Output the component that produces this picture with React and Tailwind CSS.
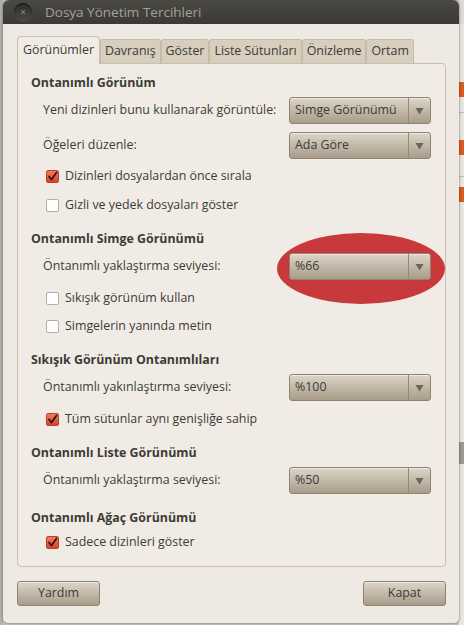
import React from "react";

const TXT = "text-[#3c3b37]";

function Combo({ value }) {
  return (
    <div className="relative z-10 flex h-[27px] w-[142px] items-stretch rounded-[3px] border border-[#8f8474] bg-gradient-to-b from-[#ddd5c8] to-[#a99d8a] shadow-[inset_0_1px_0_rgba(255,255,255,0.45)]">
      <div className={`flex flex-1 items-center pl-[5px] text-[12.4px] ${TXT}`}>{value}</div>
      <div className="flex w-[22px] items-center justify-center border-l border-[#948979]">
        <svg width="9" height="8" viewBox="0 0 9 8">
          <path d="M0.5 1 L8.5 1 L4.5 7.5 Z" fill="#6b645a" />
        </svg>
      </div>
    </div>
  );
}

function Check({ checked, label }) {
  return (
    <div className="flex h-[20px] items-center pl-[15px]">
      {checked ? (
        <div className="flex h-[13px] w-[13px] items-center justify-center rounded-[2px] border border-[#b8432c] bg-gradient-to-b from-[#f47a5c] to-[#dc3f2a]">
          <svg width="11" height="11" viewBox="0 0 11 11">
            <path d="M2 5.5 L4.5 8.5 L9.5 1.5" stroke="#2b1712" strokeWidth="1.8" fill="none" strokeLinecap="round" strokeLinejoin="round" />
          </svg>
        </div>
      ) : (
        <div className="h-[13px] w-[13px] rounded-[2px] border border-[#b7ad9d] bg-white" />
      )}
      <span className={`ml-[6px] text-[12.4px] ${TXT}`}>{label}</span>
    </div>
  );
}

function ComboRow({ label, value, circled }) {
  return (
    <div className="relative flex h-[27px] items-center justify-between pl-[12px]">
      <span className={`text-[12.4px] ${TXT}`}>{label}</span>
      {circled && (
        <div className="absolute right-[-14px] top-[-20px] z-0 h-[71px] w-[168px] rounded-[50%] bg-[#c8393b]" />
      )}
      <Combo value={value} />
    </div>
  );
}

function Heading({ children }) {
  return (
    <div className={`flex h-[20px] items-center text-[12.4px] font-bold ${TXT}`}>{children}</div>
  );
}

function Tab({ children, active }) {
  if (active)
    return (
      <div className="relative z-10 mb-[-1px] flex h-[28px] items-center rounded-t-[4px] border border-b-0 border-[#c9bfac] bg-[#f0ece5] px-[5px] text-[12.4px] text-[#3c3b37]">
        {children}
      </div>
    );
  return (
    <div className="flex h-[24px] items-center rounded-t-[3px] border border-b-0 border-[#c6bba7] bg-[#d8cebd] px-[4px] text-[12.4px] text-[#3c3b37]">
      {children}
    </div>
  );
}

function Button({ children }) {
  return (
    <div className="flex h-[25px] w-[83px] items-center justify-center rounded-[3px] border border-[#8f8474] bg-gradient-to-b from-[#ddd5c8] to-[#a99d8a] text-[12.4px] text-[#3c3b37] shadow-[inset_0_1px_0_rgba(255,255,255,0.45)]">
      {children}
    </div>
  );
}

export default function App() {
  return (
    <div className="relative h-[625px] w-[464px] overflow-hidden bg-[#c9c7c3] font-['Open_Sans',sans-serif]">
      {/* desktop background: left strip */}
      <div className="absolute left-0 top-0 h-[625px] w-[3px] bg-[#b4b2ae]" />
      {/* right strip: another window behind */}
      <div className="absolute right-0 top-0 h-[625px] w-[5px] bg-[#e9e7e4]">
        <div className="h-[24px] bg-[#dedbd6]" />
        <div className="mt-[58px] h-[15px] bg-[#dd5b20]" />
        <div className="mt-[15px] h-px bg-[#bcbab6]" />
        <div className="mt-[27px] h-[15px] bg-[#dd5b20]" />
        <div className="mt-[21px] h-px bg-[#bcbab6]" />
        <div className="mt-[10px] h-[15px] bg-[#dd5b20]" />
        <div className="mt-[240px] h-[22px] bg-[#9c9a95]" />
      </div>

      {/* window */}
      <div className="absolute left-[3px] top-0 flex h-[623px] w-[456px] flex-col overflow-hidden rounded-t-[6px] rounded-b-[5px] bg-[#eeeae3] shadow-[0_0_3px_rgba(0,0,0,0.5)]">
        {/* title bar */}
        <div className="flex h-[24px] items-center bg-gradient-to-b from-[#4a4944] to-[#3a3935]">
          <div className="ml-[11px] flex h-[18px] w-[18px] items-center justify-center rounded-full bg-gradient-to-b from-[#2c2b28] to-[#4a4944] shadow-[inset_0_1px_1px_rgba(0,0,0,0.6),0_1px_0_rgba(255,255,255,0.1)]">
            <span className="text-[10px] leading-none text-[#8c8a84]">×</span>
          </div>
          <span className="ml-[13px] text-[13.5px] text-[#a4a199]">Dosya Yönetim Tercihleri</span>
        </div>

        {/* content */}
        <div className="flex flex-1 flex-col pl-[14px] pr-[13px] pt-[12px]">
          <div className="flex h-[27px] items-end">
            <Tab active>Görünümler</Tab>
            <Tab>Davranış</Tab>
            <Tab>Göster</Tab>
            <Tab>Liste Sütunları</Tab>
            <Tab>Önizleme</Tab>
            <Tab>Ortam</Tab>
          </div>

          <div className="flex h-[504px] flex-col rounded-b-[4px] rounded-tr-[4px] border border-[#c9bfac] bg-[#f0ece5] pl-[13px] pr-[14px]">
            <div className="mt-[9px]"><Heading>Ontanımlı Görünüm</Heading></div>
            <div className="mt-[4px]"><ComboRow label="Yeni dizinleri bunu kullanarak görüntüle:" value="Simge Görünümü" /></div>
            <div className="mt-[8px]"><ComboRow label="Öğeleri düzenle:" value="Ada Göre" /></div>
            <div className="mt-[7px]"><Check checked label="Dizinleri dosyalardan önce sırala" /></div>
            <div className="mt-[9px]"><Check label="Gizli ve yedek dosyaları göster" /></div>

            <div className="mt-[14px]"><Heading>Ontanımlı Simge Görünümü</Heading></div>
            <div className="mt-[4px]"><ComboRow circled label="Öntanımlı yaklaştırma seviyesi:" value="%66" /></div>
            <div className="mt-[8px]"><Check label="Sıkışık görünüm kullan" /></div>
            <div className="mt-[8px]"><Check label="Simgelerin yanında metin" /></div>

            <div className="mt-[14px]"><Heading>Sıkışık Görünüm Ontanımlıları</Heading></div>
            <div className="mt-[4px]"><ComboRow label="Öntanımlı yakınlaştırma seviyesi:" value="%100" /></div>
            <div className="mt-[8px]"><Check checked label="Tüm sütunlar aynı genişliğe sahip" /></div>

            <div className="mt-[14px]"><Heading>Ontanımlı Liste Görünümü</Heading></div>
            <div className="mt-[4px]"><ComboRow label="Öntanımlı yaklaştırma seviyesi:" value="%50" /></div>

            <div className="mt-[14px]"><Heading>Ontanımlı Ağaç Görünümü</Heading></div>
            <div className="mt-[4px]"><Check checked label="Sadece dizinleri göster" /></div>
          </div>

          <div className="mt-[14px] flex justify-between">
            <Button>Yardım</Button>
            <Button>Kapat</Button>
          </div>
        </div>
      </div>
    </div>
  );
}
